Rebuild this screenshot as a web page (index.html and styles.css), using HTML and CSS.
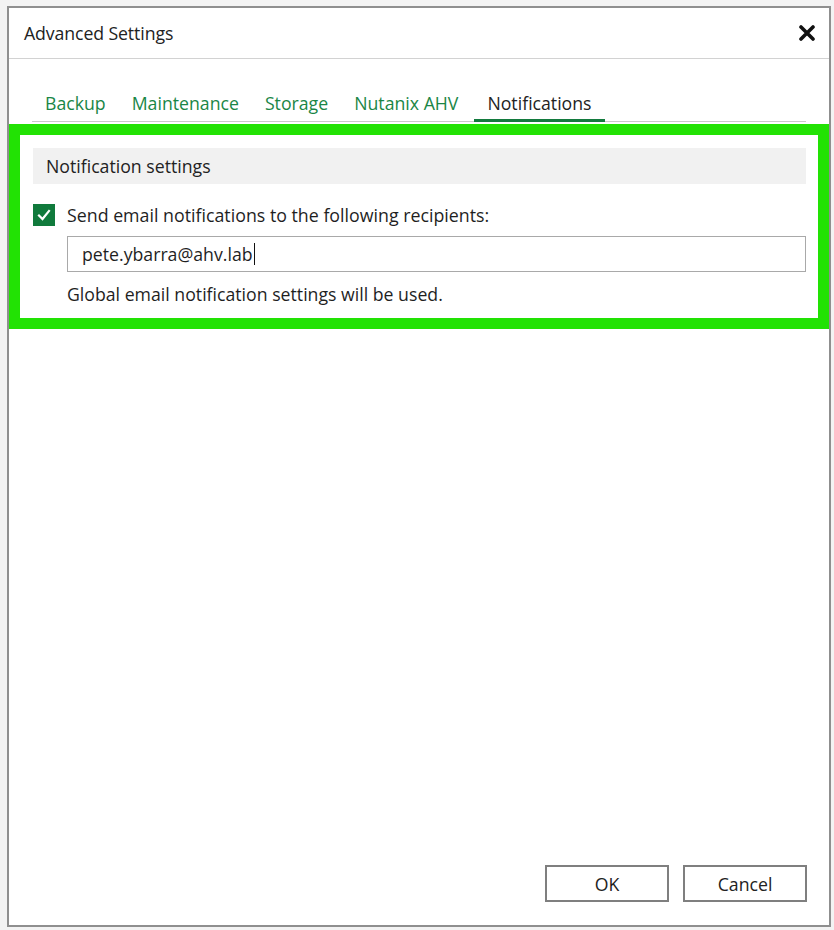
FILE: index.html
```html
<!DOCTYPE html>
<html lang="en">
<head>
<meta charset="utf-8">
<title>Advanced Settings</title>
<link rel="stylesheet" href="styles.css">
</head>
<body>
<div class="screen">
  <div class="dialog">
    <header class="titlebar">
      <span class="title">Advanced Settings</span>
      <button class="close" aria-label="Close">
        <svg width="16" height="16" viewBox="0 0 16 16"><path d="M2 2 L14 14 M14 2 L2 14" stroke="#111" stroke-width="3.6" stroke-linecap="round"/></svg>
      </button>
    </header>
    <main class="content">
      <nav class="tabs">
        <span class="tab">Backup</span>
        <span class="tab">Maintenance</span>
        <span class="tab">Storage</span>
        <span class="tab">Nutanix AHV</span>
        <span class="tab active">Notifications</span>
      </nav>
      <section class="highlight">
        <div class="section-head">Notification settings</div>
        <label class="check-row">
          <span class="checkbox">
            <svg width="14" height="12" viewBox="0 0 14 12"><path d="M2 6.5 L5.5 10 L12 2" fill="none" stroke="#fff" stroke-width="2.2" stroke-linecap="square"/></svg>
          </span>
          <span>Send email notifications to the following recipients:</span>
        </label>
        <div class="input">pete.ybarra@ahv.lab<span class="caret"></span></div>
        <p class="hint">Global email notification settings will be used.</p>
      </section>
    </main>
    <footer class="footer">
      <button class="btn">OK</button>
      <button class="btn">Cancel</button>
    </footer>
  </div>
</div>
</body>
</html>
```
FILE: styles.css
```css
* { box-sizing: border-box; }
html, body { margin: 0; padding: 0; }
body {
  width: 834px;
  height: 930px;
  background: #f3f3f3;
  font-family: "Open Sans", "Noto Sans", sans-serif;
  color: #1f1f1f;
  overflow: hidden;
}
.screen {
  padding: 6px 0 0 7px;
}
.dialog {
  width: 824px;
  height: 921px;
  background: #fff;
  border: 2px solid #8f8f8f;
  display: flex;
  flex-direction: column;
}
.titlebar {
  height: 51px;
  border-bottom: 1px solid #d2d2d2;
  display: flex;
  align-items: center;
  justify-content: space-between;
  padding: 0 14px 0 15px;
}
.title {
  font-size: 17.7px;
  color: #222;
  letter-spacing: -0.1px;
}
.close {
  border: 0;
  background: none;
  padding: 0;
  width: 16px;
  height: 16px;
  display: flex;
}
.content {
  flex: 1;
}
.tabs {
  display: flex;
  margin: 32px 23px 0 23px;
  border-bottom: 1px solid #c9c9c9;
}
.tab {
  font-size: 17.7px;
  line-height: 24px;
  padding: 0 13px 4px;
  color: #1a8646;
  border-bottom: 3px solid transparent;
  margin-bottom: -1px;
}
.tab:nth-child(4) {
  padding-right: 16px;
}
.tab.active {
  color: #222;
  border-bottom-color: #137a3e;
}
.highlight {
  margin-top: 2px;
  border: 11px solid #22e204;
  padding: 13px 12px 12px 13px;
}
.section-head {
  height: 36px;
  background: #f1f1f1;
  padding-left: 13px;
  display: flex;
  align-items: center;
  font-size: 17.7px;
  color: #222;
}
.check-row {
  display: flex;
  align-items: center;
  gap: 12px;
  margin-top: 20px;
  font-size: 17.8px;
  line-height: 22px;
}
.checkbox {
  width: 22px;
  height: 22px;
  background: #107a3c;
  display: flex;
  align-items: center;
  justify-content: center;
  flex: none;
}
.input {
  margin: 10px 0 0 34px;
  height: 36px;
  border: 1px solid #a9a9a9;
  padding-left: 14px;
  display: flex;
  align-items: center;
  font-size: 17.7px;
  color: #1f1f1f;
}
.caret {
  display: inline-block;
  width: 1px;
  height: 22px;
  background: #111;
  margin-left: 1px;
}
.hint {
  margin: 10px 0 0 34px;
  font-size: 17.7px;
  line-height: 24px;
}
.footer {
  display: flex;
  justify-content: flex-end;
  gap: 14px;
  padding: 0 22px 23px;
}
.btn {
  width: 124px;
  height: 37px;
  background: #fff;
  border: 2px solid #7f7f7f;
  font-family: inherit;
  font-size: 17.7px;
  color: #222;
  padding: 0;
}
```
